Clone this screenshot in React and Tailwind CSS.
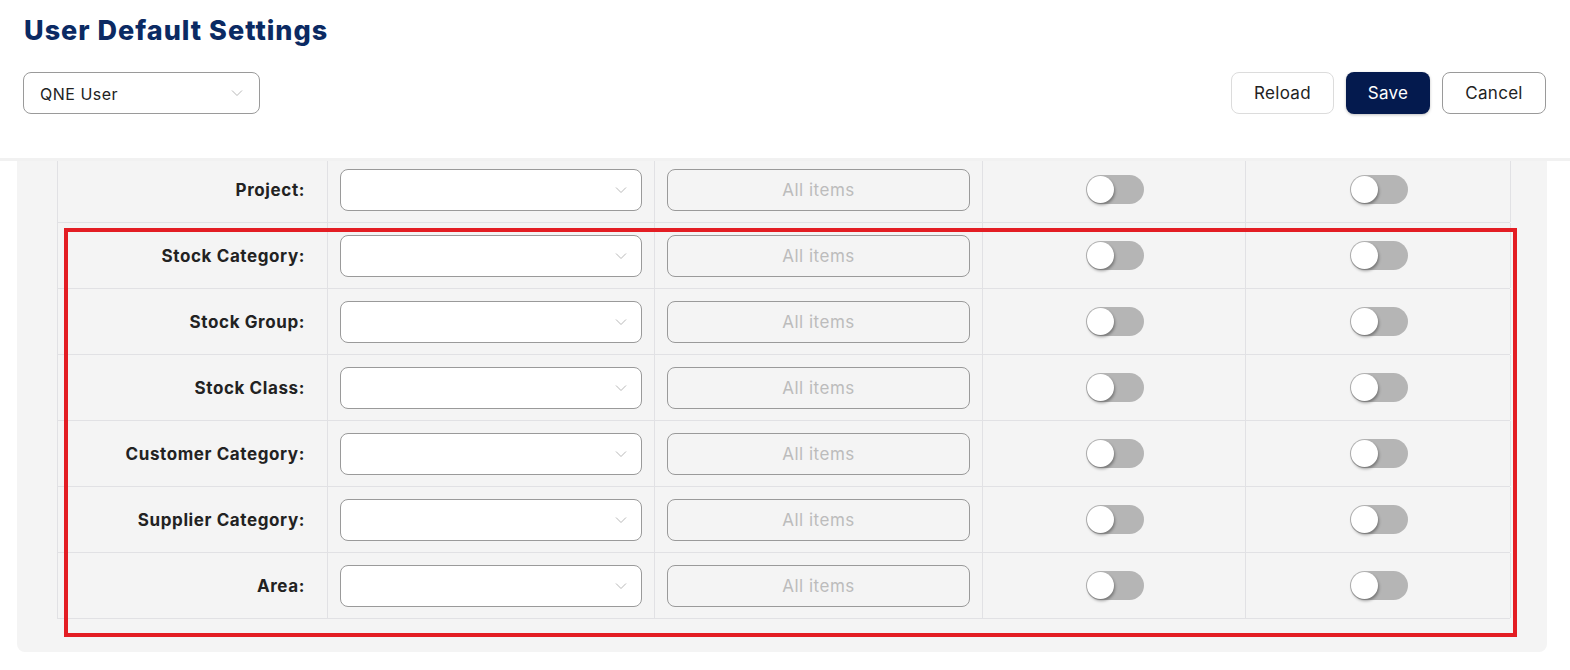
import React, { useState } from 'react';

const rows = [
  'Project:',
  'Stock Category:',
  'Stock Group:',
  'Stock Class:',
  'Customer Category:',
  'Supplier Category:',
  'Area:',
];

function Chevron() {
  return (
    <svg width="12" height="8" viewBox="0 0 12 8" fill="none">
      <path d="M1 1.5 L6 6.5 L11 1.5" stroke="#b8b8b8" strokeWidth="1" />
    </svg>
  );
}

function Toggle({ on, onClick }) {
  return (
    <button
      onClick={onClick}
      className={`relative h-[29px] w-[58px] rounded-full ${on ? 'bg-[#0a1f55]' : 'bg-[#b5b5b5]'}`}
    >
      <span
        className={`absolute top-[1px] h-[27px] w-[27px] rounded-full bg-white shadow-[1px_2px_3px_rgba(0,0,0,0.35)] ${on ? 'left-[30px]' : 'left-[1px]'}`}
      />
    </button>
  );
}

export default function App() {
  const [toggles, setToggles] = useState({});

  function flip(key) {
    setToggles(t => ({ ...t, [key]: !t[key] }));
  }

  return (
    <div className="min-h-[670px] bg-white font-['Inter',sans-serif] text-[#222]">
      <div className="h-[158px] px-6 pt-[15px]">
        <h1 className="text-[27px] font-extrabold leading-8 tracking-[1px] text-[#0b2a63]">User Default Settings</h1>
        <div className="mt-[25px] flex items-center justify-between">
          <div className="-ml-px flex h-[42px] w-[237px] items-center justify-between rounded-lg border border-[#9a9a9a] px-4">
            <span className="pt-[2px] text-base tracking-[0.5px] text-[#222]">QNE User</span>
            <Chevron />
          </div>
          <div className="-mr-[1px] flex gap-3 pr-[1px]">
            <button className="h-[42px] w-[103px] rounded-lg border border-[#dcdcdc] bg-white pt-[2px] text-[17px] tracking-[0.3px]">Reload</button>
            <button className="h-[42px] w-[84px] rounded-lg bg-[#041a4e] pt-[2px] text-[17px] tracking-[0.3px] text-white shadow-[0_1px_3px_rgba(0,0,0,0.25)]">Save</button>
            <button className="h-[42px] w-[104px] rounded-lg border border-[#9a9a9a] bg-white pt-[2px] text-[17px] tracking-[0.3px]">Cancel</button>
          </div>
        </div>
      </div>
      <div className="h-[3px] bg-[#f1f1f1]" />
      <div className="relative ml-[17px] mr-[23px] overflow-hidden rounded-b-lg bg-[#f4f4f4] pb-[33px] pl-[40px]">
        <div className="-mt-[4px] w-[1453px]">
          {rows.map(label => (
            <div
              key={label}
              className="grid h-[66px] grid-cols-[270px_327px_328px_263px_265px] border-b border-l border-[#e1e1e4]"
            >
              <div className="flex items-center justify-end border-r border-[#e1e1e4] pr-[22px] pt-[3px] text-[17px] font-bold tracking-[0.6px] text-[#222]">
                {label}
              </div>
              <div className="flex items-center border-r border-[#e1e1e4] px-3">
                <div className="flex h-[42px] w-full items-center justify-end rounded-lg border border-[#9a9a9a] bg-white pr-[14px]">
                  <Chevron />
                </div>
              </div>
              <div className="flex items-center border-r border-[#e1e1e4] px-3">
                <div className="flex h-[42px] w-full items-center justify-center rounded-lg border border-[#9a9a9a] pt-[2px] text-[17px] tracking-[0.5px] text-[#bcbcbc]">
                  All items
                </div>
              </div>
              <div className="flex items-center justify-center border-r border-[#e1e1e4] pl-[2px]">
                <Toggle on={toggles[label + 'a']} onClick={() => flip(label + 'a')} />
              </div>
              <div className="flex items-center justify-center border-r border-[#e1e1e4] pl-[2px]">
                <Toggle on={toggles[label + 'b']} onClick={() => flip(label + 'b')} />
              </div>
            </div>
          ))}
        </div>
        <div className="pointer-events-none absolute left-[47px] top-[67px] h-[409px] w-[1453px] border-4 border-[#e31d23]" />
      </div>
    </div>
  );
}
